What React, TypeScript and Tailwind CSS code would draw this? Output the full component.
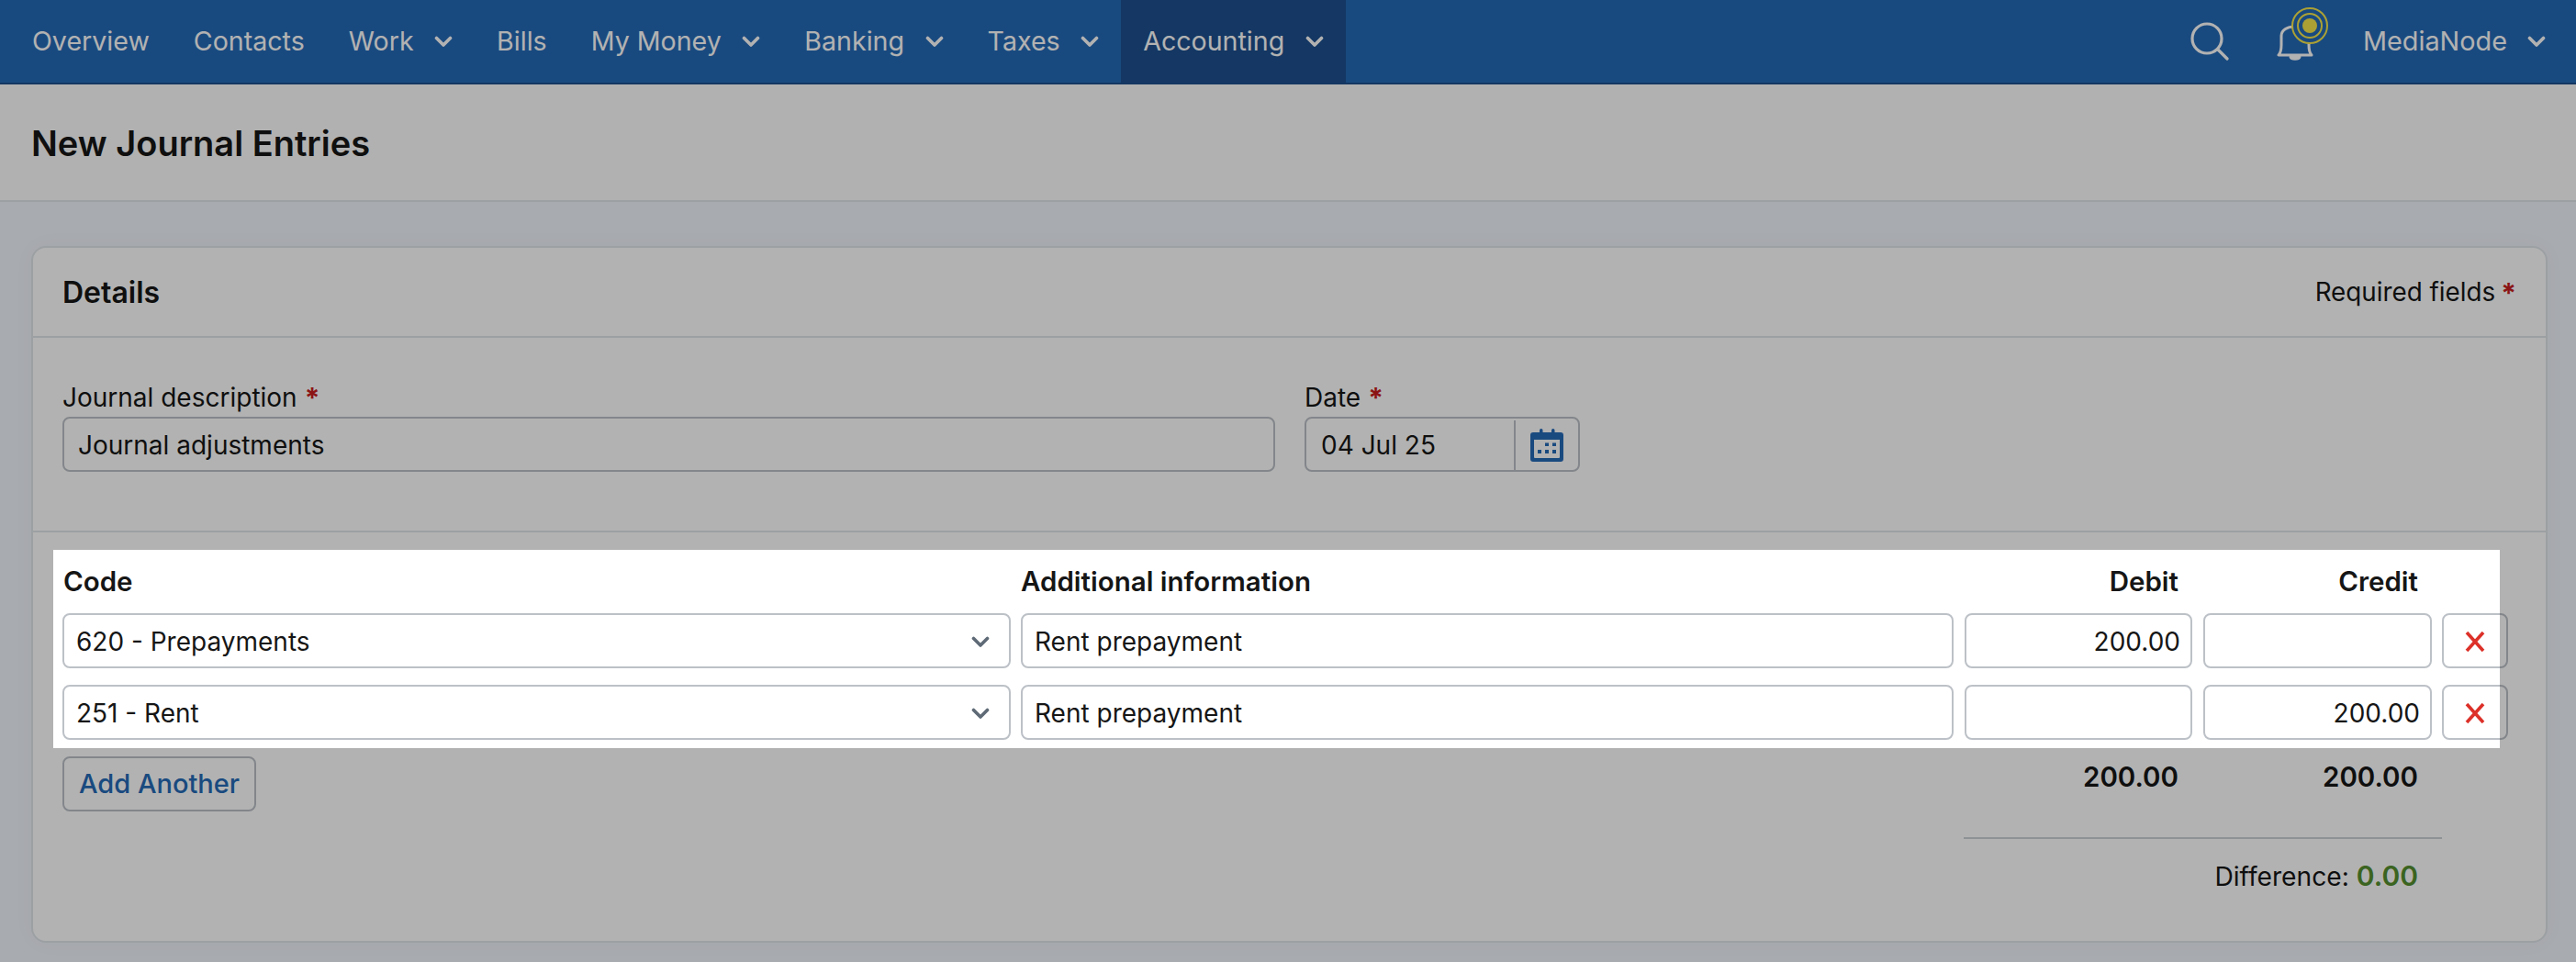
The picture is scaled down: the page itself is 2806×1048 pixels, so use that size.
import { ReactNode } from 'react';

const navItems = [
  { label: 'Overview' },
  { label: 'Contacts' },
  { label: 'Work', menu: true },
  { label: 'Bills' },
  { label: 'My Money', menu: true },
  { label: 'Banking', menu: true },
  { label: 'Taxes', menu: true },
  { label: 'Accounting', menu: true, active: true },
];

const rows = [
  { code: '620 - Prepayments', debit: '200.00', credit: '' },
  { code: '251 - Rent', debit: '', credit: '200.00' },
];

function Chevron({ className }: { className: string }) {
  return (
    <svg viewBox="0 0 20 12" fill="none" stroke="currentColor" strokeWidth="3.6" strokeLinecap="round" strokeLinejoin="round" className={className}>
      <path d="M2.5 2.5l7.5 7.5 7.5-7.5" />
    </svg>
  );
}

function Star() {
  return <span className="text-[#c81e1e] font-bold text-[30px] leading-none">*</span>;
}

function Box({ children, className = '' }: { children?: ReactNode; className?: string }) {
  return (
    <div className={`h-[60px] pt-[2px] flex items-center rounded-[8px] border-2 border-[#bcc1c7] bg-white ${className}`}>
      {children}
    </div>
  );
}

function CalendarIcon() {
  return (
    <svg viewBox="0 0 36 36" className="w-[36px] h-[36px] text-[#256ab7]" fill="currentColor">
      <path fillRule="evenodd" d="M3 4h30a3 3 0 0 1 3 3v26a3 3 0 0 1-3 3H3a3 3 0 0 1-3-3V7a3 3 0 0 1 3-3zm1 8v19a1 1 0 0 0 1 1h26a1 1 0 0 0 1-1V12z" />
      <rect x="10" y="0" width="3.5" height="8" rx="1.7" />
      <rect x="23" y="0" width="3.5" height="8" rx="1.7" />
      <rect x="16" y="15.5" width="4" height="3.5" />
      <rect x="24" y="15.5" width="4" height="3.5" />
      <rect x="8" y="23" width="4" height="4" />
      <rect x="16" y="23" width="4" height="4" />
      <rect x="24" y="23" width="4" height="4" />
    </svg>
  );
}

function BellIcon() {
  return (
    <div className="relative w-[40px] h-[44px]">
      <svg viewBox="0 0 40 44" fill="none" stroke="white" strokeWidth="3" strokeLinecap="round" strokeLinejoin="round" className="w-[40px] h-[44px]">
        <path d="M2 37h36c-2-2-3-5-3-11v-10c0-6-6-10-15-10s-15 4-15 10v10c0 6-1 9-3 11z" />
        <path d="M15 39c1 3 9 3 10 0z" fill="white" />
      </svg>
      <div className="absolute left-[16px] top-[-15px] w-[40px] h-[40px] rounded-full border-2 border-[#f5e64b] bg-[#256ab7] flex items-center justify-center">
        <div className="w-[28px] h-[28px] rounded-full border-2 border-[#f5e64b] flex items-center justify-center">
          <div className="w-[16px] h-[16px] rounded-full bg-[#f5e64b]" />
        </div>
      </div>
    </div>
  );
}

export default function App() {
  return (
    <div className="relative w-[2806px] h-[1048px] overflow-hidden bg-[#f1f5fb] text-[#161616] font-['Inter',sans-serif] text-[28px]">
      <nav className="h-[92px] flex bg-[#256ab7] border-b-2 border-[#1d4f8f] text-white pl-[11px] text-[28.6px]">
        {navItems.map((item) => (
          <div key={item.label} className={`h-full flex items-center gap-[22.5px] px-[24px] ${item.active ? 'bg-[#1d4f8f]' : ''}`}>
            <span>{item.label}</span>
            {item.menu && <Chevron className="w-[20px] h-[12px]" />}
          </div>
        ))}
        <div className="ml-auto flex items-center pr-[33px]">
          <svg viewBox="0 0 42 42" fill="none" stroke="white" strokeWidth="3.2" strokeLinecap="round" className="w-[42px] h-[42px] mr-[52px]">
            <circle cx="18" cy="18" r="16" />
            <path d="M30 30l10 10" />
          </svg>
          <BellIcon />
          <span className="ml-[54px] text-[28.8px]">MediaNode</span>
          <Chevron className="w-[20px] h-[12px] ml-[22px]" />
        </div>
      </nav>

      <header className="h-[128px] pt-[2px] flex items-center px-[34px] bg-[#fefefe] border-b-2 border-[#e0e5ea]">
        <h1 className="text-[38px] font-semibold">New Journal Entries</h1>
      </header>

      <main className="pt-[48px] pl-[34px]">
        <section className="h-[759px] w-[2741px] rounded-[16px] bg-white border-2 border-[#e0e5ea] shadow-[0_0_24px_rgba(0,0,0,0.03)]">
          <div className="h-[98px] pt-[2px] flex items-center justify-between px-[32px] border-b-2 border-[#e0e5ea]">
            <h2 className="text-[32px] font-semibold">Details</h2>
            <span className="flex items-center gap-[6px] text-[27.8px]">Required fields <Star /></span>
          </div>

          <div className="h-[212px] flex gap-[32px] px-[32px] pt-[46px] border-b-2 border-[#e0e5ea]">
            <div className="w-[1321px]">
              <div className="h-[40px] pb-[3px] flex items-center gap-[8px]">Journal description <Star /></div>
              <Box className="px-[15px]">Journal adjustments</Box>
            </div>
            <div className="w-[300px]">
              <div className="h-[40px] pb-[3px] flex items-center gap-[8px]">Date <Star /></div>
              <Box>
                <span className="w-[228px] h-full flex items-center px-[16px] border-r-2 border-[#bcc1c7]">04 Jul 25</span>
                <span className="flex-1 flex justify-center"><CalendarIcon /></span>
              </Box>
            </div>
          </div>

          <div className="px-[32px] pt-[18px]">
            <div className="flex gap-[11px] h-[70px] items-center font-semibold text-[29.5px]">
              <div className="w-[1033px] pl-px">Code</div>
              <div className="w-[1016px]">Additional information</div>
              <div className="w-[248px] ml-px text-right pr-[15px]">Debit</div>
              <div className="w-[249px] ml-px text-right pr-[15px]">Credit</div>
            </div>
            {rows.map((row) => (
              <div key={row.code} className="flex gap-[11px] mb-[18px]">
                <Box className="w-[1033px] justify-between pl-[13px] pr-[21px]">
                  {row.code}
                  <Chevron className="w-[20px] h-[12px] text-[#5e6a76]" />
                </Box>
                <Box className="w-[1016px] px-[13px]">Rent prepayment</Box>
                <Box className="w-[248px] ml-px justify-end px-[11px]">{row.debit}</Box>
                <Box className="w-[249px] ml-px justify-end px-[11px]">{row.credit}</Box>
                <Box className="w-[72px] justify-center">
                  <svg viewBox="0 0 22 22" stroke="#dc3028" strokeWidth="3.6" fill="none" className="w-[22px] h-[22px]">
                    <path d="M2 1l18 20M20 1L2 21" />
                  </svg>
                </Box>
              </div>
            ))}
            <div className="flex gap-[11px]">
              <div className="w-[2060px]">
                <button className="h-[60px] w-[211px] rounded-[8px] border-2 border-[#bcc1c7] text-[#256ab7] font-medium text-[29px]">Add Another</button>
              </div>
              <div className="w-[248px] ml-px h-[44px] leading-[44px] text-right pr-[15px] font-semibold text-[29.5px]">200.00</div>
              <div className="w-[249px] ml-px h-[44px] leading-[44px] text-right pr-[15px] font-semibold text-[29.5px]">200.00</div>
            </div>
            <div className="ml-[2071px] w-[521px] -mt-[16px] pt-[44px]">
              <div className="border-t-2 border-[#ccd1d6] pt-[18px] pr-[26px] text-right text-[28.2px]">
                Difference: <span className="text-[#55902f] font-semibold text-[30px]">0.00</span>
              </div>
            </div>
          </div>
        </section>
      </main>

      {/* dim layer with a cut-out around the table */}
      <div className="absolute left-[58px] top-[599px] w-[2665px] h-[216px] pointer-events-none shadow-[0_0_0_3000px_rgba(0,0,0,0.3)]" />
    </div>
  );
}
